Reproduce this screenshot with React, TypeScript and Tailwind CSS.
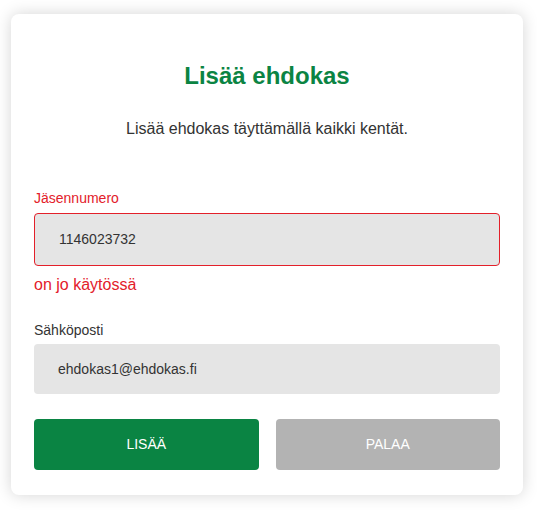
import React from 'react';

const font = { fontFamily: '"Liberation Sans", Arial, sans-serif' };

export default function App() {
  return (
    <div className="min-h-[510px] w-[537px] bg-white pl-[11px] pt-[14px]" style={font}>
      <div className="w-[512px] rounded-lg bg-white px-[23px] pb-[25px] pt-[48px] shadow-[0_0_16px_rgba(0,0,0,0.17)]">
        <h1 className="text-center text-[24px] font-bold leading-[27px] text-[#0b8443]">Lisää ehdokas</h1>
        <p className="mt-[31px] text-center text-[16px] leading-[18px] text-[#333333]">
          Lisää ehdokas täyttämällä kaikki kentät.
        </p>

        <form className="mt-[52px] flex flex-col" onSubmit={(e) => e.preventDefault()}>
          <label className="text-[14px] leading-[16px] text-[#e3202a]">Jäsennumero</label>
          <div className="mt-[7px] flex h-[53px] items-center rounded border border-[#e3202a] bg-[#e5e5e5] px-[24px] text-[14px] text-[#333333]">
            1146023732
          </div>
          <div className="mt-[10px] text-[16px] leading-[18px] text-[#e3202a]">on jo käytössä</div>

          <label className="mt-[28px] text-[14px] leading-[16px] text-[#333333]">Sähköposti</label>
          <div className="mt-[6px] flex h-[50px] items-center rounded bg-[#e5e5e5] px-[24px] text-[14px] text-[#333333]">
            ehdokas1@ehdokas.fi
          </div>

          <div className="mt-[25px] grid grid-cols-2 gap-[17px]">
            <button type="submit" className="h-[51px] rounded bg-[#0a8443] text-[14px] text-white">
              LISÄÄ
            </button>
            <button type="button" className="h-[51px] rounded bg-[#b3b3b3] text-[14px] text-white">
              PALAA
            </button>
          </div>
        </form>
      </div>
    </div>
  );
}
